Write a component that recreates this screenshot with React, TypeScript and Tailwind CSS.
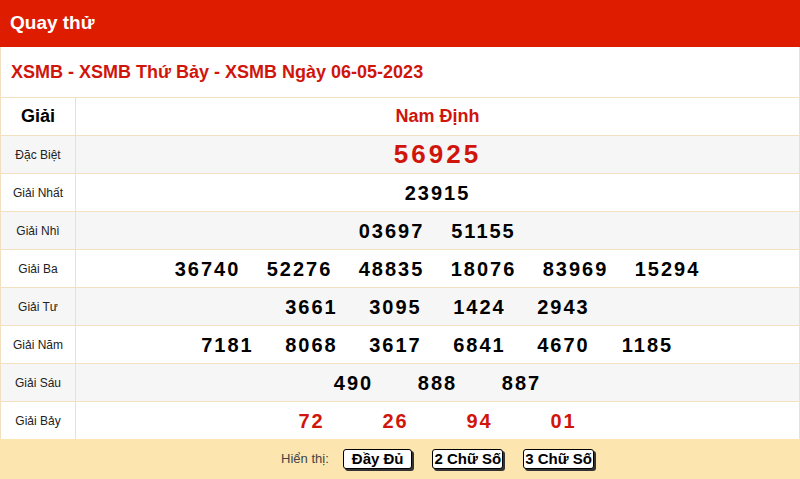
const rows: { label: string; nums: string[]; w: string; cls: string; bg: string }[] = [
  { label: "Đặc Biệt", nums: ["56925"], w: "w-[92px]", cls: "text-[26px] text-[#d0150b] tracking-[3px]", bg: "bg-[#f6f6f6]" },
  { label: "Giải Nhất", nums: ["23915"], w: "w-[92px]", cls: "text-[20px] text-black tracking-[2px]", bg: "bg-white" },
  { label: "Giải Nhì", nums: ["03697", "51155"], w: "w-[92px]", cls: "text-[20px] text-black tracking-[2px]", bg: "bg-[#f6f6f6]" },
  { label: "Giải Ba", nums: ["36740", "52276", "48835", "18076", "83969", "15294"], w: "w-[92px]", cls: "text-[20px] text-black tracking-[2px]", bg: "bg-white" },
  { label: "Giải Tư", nums: ["3661", "3095", "1424", "2943"], w: "w-[84px]", cls: "text-[20px] text-black tracking-[2px]", bg: "bg-[#f6f6f6]" },
  { label: "Giải Năm", nums: ["7181", "8068", "3617", "6841", "4670", "1185"], w: "w-[84px]", cls: "text-[20px] text-black tracking-[2px]", bg: "bg-white" },
  { label: "Giải Sáu", nums: ["490", "888", "887"], w: "w-[84px]", cls: "text-[20px] text-black tracking-[2px]", bg: "bg-[#f6f6f6]" },
  { label: "Giải Bảy", nums: ["72", "26", "94", "01"], w: "w-[84px]", cls: "text-[20px] text-[#d0150b] tracking-[2px]", bg: "bg-white" },
];

export default function App() {
  return (
    <div className="w-[800px] h-[479px] overflow-hidden bg-white" style={{ fontFamily: '"Liberation Sans", Arial, sans-serif' }}>
      <div className="h-[47px] bg-[#dd1c00] flex items-center px-[10px] text-white text-[19px] font-bold">Quay thử</div>
      <div className="h-[50px] flex items-center px-[10px] text-[#d0150b] text-[18px] font-bold border-x border-[#f3e0c0]">
        XSMB - XSMB Thứ Bảy - XSMB Ngày 06-05-2023
      </div>
      <div className="border-x border-[#f3e0c0]">
        <div className="flex h-[38px] border-t border-[#f3e0c0] bg-white">
          <div className="w-[75px] shrink-0 border-r border-[#f3e0c0] flex items-center justify-center text-[18px] font-bold text-black">Giải</div>
          <div className="flex-1 flex items-center justify-center text-[18px] font-bold text-[#d0150b]">Nam Định</div>
        </div>
        {rows.map((r) => (
          <div key={r.label} className={`flex h-[38px] border-t border-[#f3e0c0] ${r.bg}`}>
            <div className="w-[75px] shrink-0 border-r border-[#f3e0c0] flex items-center justify-center text-[12px] text-[#222]">{r.label}</div>
            <div className="flex-1 flex items-center justify-center">
              {r.nums.map((n, i) => (
                <span key={i} className={`${r.w} text-center font-bold ${r.cls}`}>{n}</span>
              ))}
            </div>
          </div>
        ))}
      </div>
      <div className="h-[40px] bg-[#fde5b0] flex items-center justify-center gap-[20px] text-[13px] pl-[75px]">
        <span className="text-[#444] mr-[-6px]">Hiển thị:</span>
        <span className="border border-black rounded-[3px] bg-white px-[8px] h-[20px] flex items-center font-bold text-[15px] shadow-[2px_2px_0_#333]">Đầy Đủ</span>
        <span className="border border-black rounded-[3px] bg-white px-[1px] h-[20px] flex items-center font-bold text-[15px] shadow-[2px_2px_0_#333]">2 Chữ Số</span>
        <span className="border border-black rounded-[3px] bg-white px-[1px] h-[20px] flex items-center font-bold text-[15px] shadow-[2px_2px_0_#333]">3 Chữ Số</span>
      </div>
    </div>
  );
}
